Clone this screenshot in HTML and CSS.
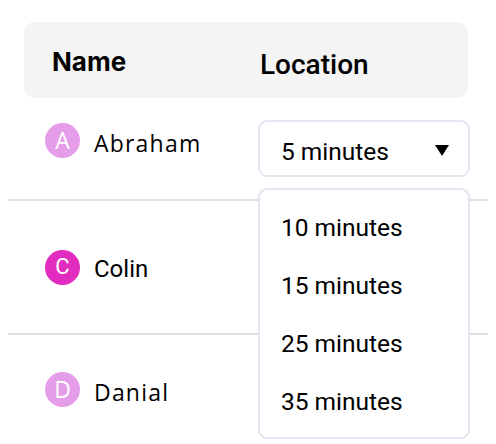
FILE: index.html
```html
<!DOCTYPE html>
<html>
<head>
<meta charset="utf-8">
<link rel="stylesheet" href="styles.css">
</head>
<body>
<div class="table">
  <div class="header">
    <div class="th th-name">Name</div>
    <div class="th th-loc">Location</div>
  </div>
  <div class="row row-first">
    <div class="person">
      <span class="avatar light alt">A</span>
      <span class="pname alt">Abraham</span>
    </div>
    <div class="loc">
      <div class="select">
        <span>5 minutes</span>
        <svg class="caret" width="14" height="11" viewBox="0 0 14 11"><polygon points="0,0 14,0 7,11" fill="#000"/></svg>
      </div>
      <ul class="menu">
        <li>10 minutes</li>
        <li>15 minutes</li>
        <li>25 minutes</li>
        <li>35 minutes</li>
      </ul>
    </div>
  </div>
  <div class="row row-mid">
    <div class="person">
      <span class="avatar strong">C</span>
      <span class="pname">Colin</span>
    </div>
  </div>
  <div class="row row-last">
    <div class="person">
      <span class="avatar light alt">D</span>
      <span class="pname alt">Danial</span>
    </div>
  </div>
</div>
</body>
</html>
```

FILE: styles.css
```css
html, body {
  margin: 0;
  padding: 0;
  background: #ffffff;
}
body {
  margin: 8px;
  font-family: Roboto, "Liberation Sans", sans-serif;
  color: #000;
}
.table {
  width: 480px;
  position: relative;
}
.header {
  margin: 14px 20px 0 16px;
  height: 76px;
  background: #f4f4f4;
  border-radius: 10px;
  display: grid;
  grid-template-columns: 234px 1fr;
  align-items: center;
}
.th {
  line-height: 32px;
}
.th-name {
  font-family: Inter, Roboto, sans-serif;
  font-size: 26px;
  font-weight: 700;
  padding-left: 28px;
  padding-top: 3px;
}
.th-loc {
  font-size: 28px;
  font-weight: 500;
  padding-left: 2px;
  padding-top: 9px;
}
.row {
  display: grid;
  grid-template-columns: 250px 1fr;
  border-bottom: 2px solid #dfdfdf;
}
.row-first {
  height: 101px;
  align-items: start;
}
.row-first .person {
  padding-top: 25px;
}
.row-mid {
  height: 132px;
  align-items: center;
}
.row-last {
  height: 108px;
  align-items: center;
  border-bottom: none;
}
.person {
  display: flex;
  align-items: center;
  padding-left: 37px;
  gap: 14px;
}
.avatar {
  width: 35px;
  height: 35px;
  border-radius: 50%;
  display: flex;
  align-items: center;
  justify-content: center;
  color: #fff;
  font-size: 22px;
  line-height: 1;
}
.avatar.light { background: #e59de9; }
.avatar.strong { background: #e22bbf; }
.pname {
  font-size: 24px;
  line-height: 28px;
  padding-top: 3px;
}
.pname.alt {
  padding-top: 5px;
}
.alt {
  font-family: "Open Sans", sans-serif;
  font-size: 23px;
  letter-spacing: 1.2px;
}
.avatar.alt {
  letter-spacing: 0;
  font-size: 23px;
  font-weight: 400;
}
.loc {
  padding-top: 22px;
}
.select {
  box-sizing: border-box;
  width: 212px;
  height: 57px;
  border: 2px solid #e3e7f1;
  border-radius: 9px;
  display: flex;
  align-items: center;
  justify-content: space-between;
  padding: 5px 19px 0 21px;
  font-size: 24.5px;
}
.caret {
  display: block;
  margin-top: -2px;
}
.menu {
  position: absolute;
  left: 250px;
  top: 166px;
  box-sizing: border-box;
  width: 212px;
  height: 251px;
  margin: 0;
  list-style: none;
  background: #fff;
  border: 2px solid #e3e7f1;
  border-radius: 9px;
  padding: 9px 0 6px 21px;
  font-size: 24.5px;
}
.menu li {
  height: 58px;
  line-height: 58px;
}
```
